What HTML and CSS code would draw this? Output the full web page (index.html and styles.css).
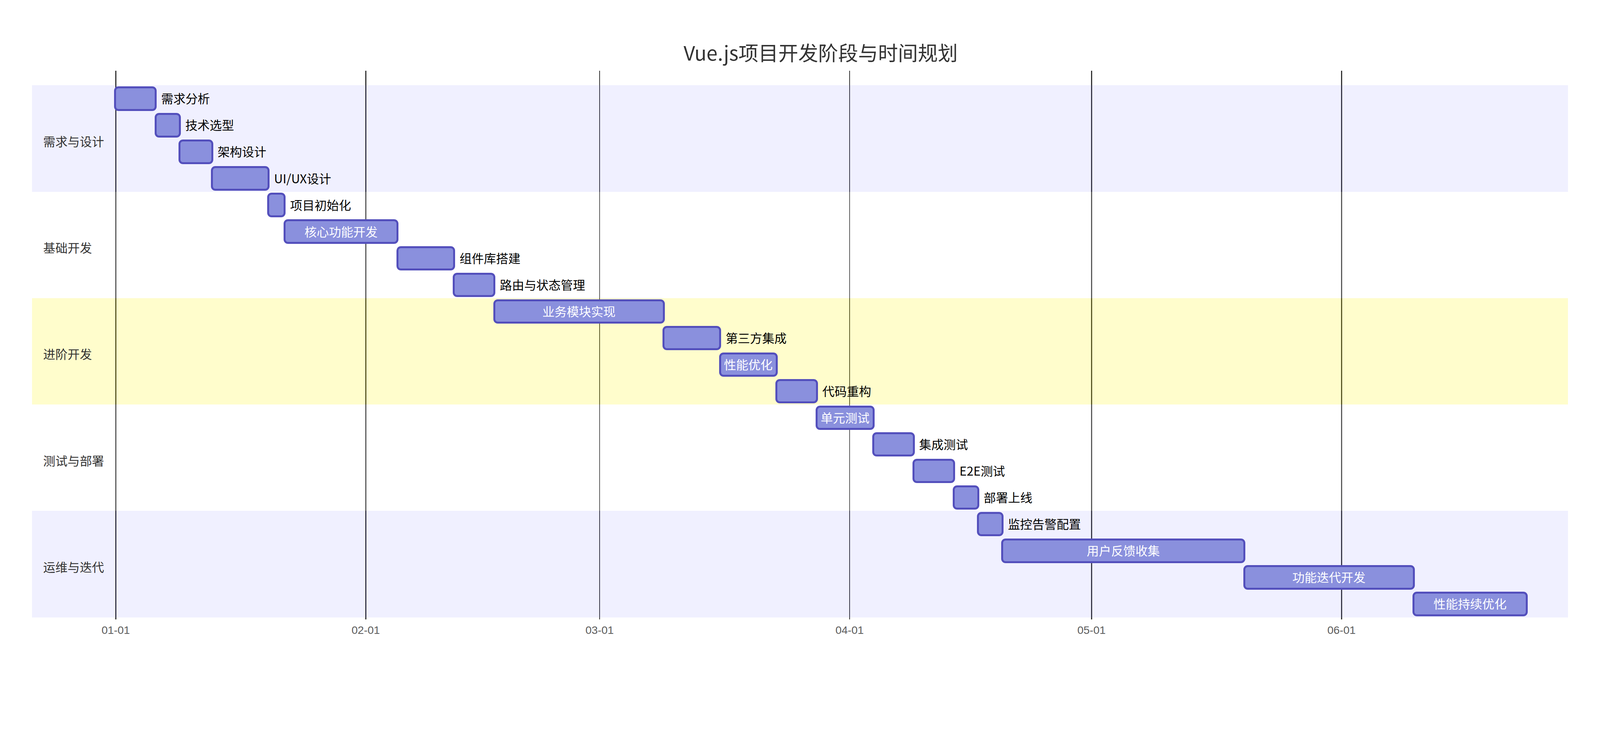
FILE: index.html
```html
<!DOCTYPE html>
<html lang="zh-CN">
<head>
<meta charset="utf-8">
<title>Vue.js项目开发阶段与时间规划</title>
<link rel="stylesheet" href="styles.css">
</head>
<body>
<div class="page">
  <header class="header">
    <h1 class="title">Vue.js项目开发阶段与时间规划</h1>
  </header>
  <div class="chart">
    <div class="gridline" style="--x:225"></div>
    <div class="gridline" style="--x:902"></div>
    <div class="gridline" style="--x:1535.3"></div>
    <div class="gridline" style="--x:2212.3"></div>
    <div class="gridline" style="--x:2867.5"></div>
    <div class="gridline" style="--x:3544.5"></div>

    <section class="section sec-a">
      <div class="sec-label">需求与设计</div>
      <div class="rows">
        <div class="row"><div class="bar" style="--x:-3;--w:115.2"></div><span class="label">需求分析</span></div>
        <div class="row"><div class="bar" style="--x:106.2;--w:71.5"></div><span class="label">技术选型</span></div>
        <div class="row"><div class="bar" style="--x:171.7;--w:93.4"></div><span class="label">架构设计</span></div>
        <div class="row"><div class="bar" style="--x:259.1;--w:158.9"></div><span class="label">UI/UX设计</span></div>
      </div>
    </section>

    <section class="section sec-b">
      <div class="sec-label">基础开发</div>
      <div class="rows">
        <div class="row"><div class="bar" style="--x:411.9;--w:49.7"></div><span class="label">项目初始化</span></div>
        <div class="row"><div class="bar" style="--x:455.6;--w:311.7"><span class="inner">核心功能开发</span></div></div>
        <div class="row"><div class="bar" style="--x:761.4;--w:158.9"></div><span class="label">组件库搭建</span></div>
        <div class="row"><div class="bar" style="--x:914.2;--w:115.2"></div><span class="label">路由与状态管理</span></div>
      </div>
    </section>

    <section class="section sec-c">
      <div class="sec-label">进阶开发</div>
      <div class="rows">
        <div class="row"><div class="bar" style="--x:1023.4;--w:464.6"><span class="inner">业务模块实现</span></div></div>
        <div class="row"><div class="bar" style="--x:1482.1;--w:158.9"></div><span class="label">第三方集成</span></div>
        <div class="row"><div class="bar" style="--x:1634.9;--w:158.9"><span class="inner">性能优化</span></div></div>
        <div class="row"><div class="bar" style="--x:1787.8;--w:115.2"></div><span class="label">代码重构</span></div>
      </div>
    </section>

    <section class="section sec-b">
      <div class="sec-label">测试与部署</div>
      <div class="rows">
        <div class="row"><div class="bar" style="--x:1897;--w:158.9"><span class="inner">单元测试</span></div></div>
        <div class="row"><div class="bar" style="--x:2049.9;--w:115.2"></div><span class="label">集成测试</span></div>
        <div class="row"><div class="bar" style="--x:2159.1;--w:115.2"></div><span class="label">E2E测试</span></div>
        <div class="row"><div class="bar" style="--x:2268.3;--w:71.5"></div><span class="label">部署上线</span></div>
      </div>
    </section>

    <section class="section sec-a">
      <div class="sec-label">运维与迭代</div>
      <div class="rows">
        <div class="row"><div class="bar" style="--x:2333.8;--w:71.5"></div><span class="label">监控告警配置</span></div>
        <div class="row"><div class="bar" style="--x:2399.3;--w:661.2"><span class="inner">用户反馈收集</span></div></div>
        <div class="row"><div class="bar" style="--x:3054.5;--w:464.6"><span class="inner">功能迭代开发</span></div></div>
        <div class="row"><div class="bar" style="--x:3513.1;--w:311.7"><span class="inner">性能持续优化</span></div></div>
      </div>
    </section>

    <div class="axis">
      <span class="tick" style="--x:226.5">01-01</span>
      <span class="tick" style="--x:903.5">02-01</span>
      <span class="tick" style="--x:1536.8">03-01</span>
      <span class="tick" style="--x:2213.8">04-01</span>
      <span class="tick" style="--x:2869">05-01</span>
      <span class="tick" style="--x:3546">06-01</span>
    </div>
  </div>
</div>
</body>
</html>
```

FILE: styles.css
```css
:root {
  --px: calc(100vw / 4333);
}

html, body {
  margin: 0;
  padding: 0;
  background: #ffffff;
}

body {
  width: 100vw;
  overflow: hidden;
  font-family: "Noto Sans CJK SC", "Noto Sans", sans-serif;
}

.page {
  width: 100vw;
  height: calc(1914 * var(--px));
}

.header {
  box-sizing: border-box;
  height: calc(192 * var(--px));
  padding-top: calc(114 * var(--px));
  padding-left: calc(112 * var(--px));
}

.title {
  margin: 0;
  font-size: calc(54 * var(--px));
  line-height: calc(54 * var(--px));
  font-weight: 400;
  color: #333333;
  text-align: center;
  white-space: nowrap;
}

.chart {
  position: relative;
  z-index: 0;
  margin-left: calc(87 * var(--px));
  width: calc(4159 * var(--px));
  padding-top: calc(39 * var(--px));
}

.gridline {
  position: absolute;
  top: 0;
  left: calc(var(--x) * var(--px));
  width: calc(3 * var(--px));
  height: calc(1485 * var(--px));
  background: #333333;
  z-index: -1;
}

.section {
  display: grid;
  grid-template-columns: calc(225.2 * var(--px)) 1fr;
  height: calc(288 * var(--px));
}

.sec-a { background: rgba(102, 102, 255, 0.098); }
.sec-b { background: rgba(255, 255, 255, 0.2); }
.sec-c { background: rgba(255, 244, 0, 0.2); }

.sec-label {
  align-self: center;
  margin-top: calc(13 * var(--px));
  padding-left: calc(30 * var(--px));
  font-size: calc(33 * var(--px));
  line-height: calc(33 * var(--px));
  color: #333333;
  white-space: nowrap;
}

.rows {
  display: flex;
  flex-direction: column;
}

.row {
  height: calc(72 * var(--px));
  display: flex;
  align-items: center;
}

.bar {
  flex: none;
  box-sizing: border-box;
  margin-left: calc(var(--x) * var(--px));
  width: calc(var(--w) * var(--px));
  height: calc(66 * var(--px));
  border: calc(6 * var(--px)) solid #534fbc;
  border-radius: calc(12 * var(--px));
  background: #8a90dd;
  display: flex;
  align-items: center;
  justify-content: center;
}

.inner {
  color: #ffffff;
  font-size: calc(33 * var(--px));
  line-height: calc(33 * var(--px));
  white-space: nowrap;
  padding-bottom: calc(3 * var(--px));
}

.label {
  margin-left: calc(12 * var(--px));
  font-size: calc(33 * var(--px));
  line-height: calc(33 * var(--px));
  color: #000000;
  white-space: nowrap;
  padding-bottom: calc(3 * var(--px));
}

.axis {
  position: relative;
  height: calc(70 * var(--px));
}

.tick {
  position: absolute;
  top: calc(20 * var(--px));
  left: calc(var(--x) * var(--px));
  transform: translateX(-50%);
  font-family: "Liberation Sans", Arial, sans-serif;
  font-size: calc(30 * var(--px));
  line-height: calc(30 * var(--px));
  color: #5c5c5c;
  white-space: nowrap;
}
```
